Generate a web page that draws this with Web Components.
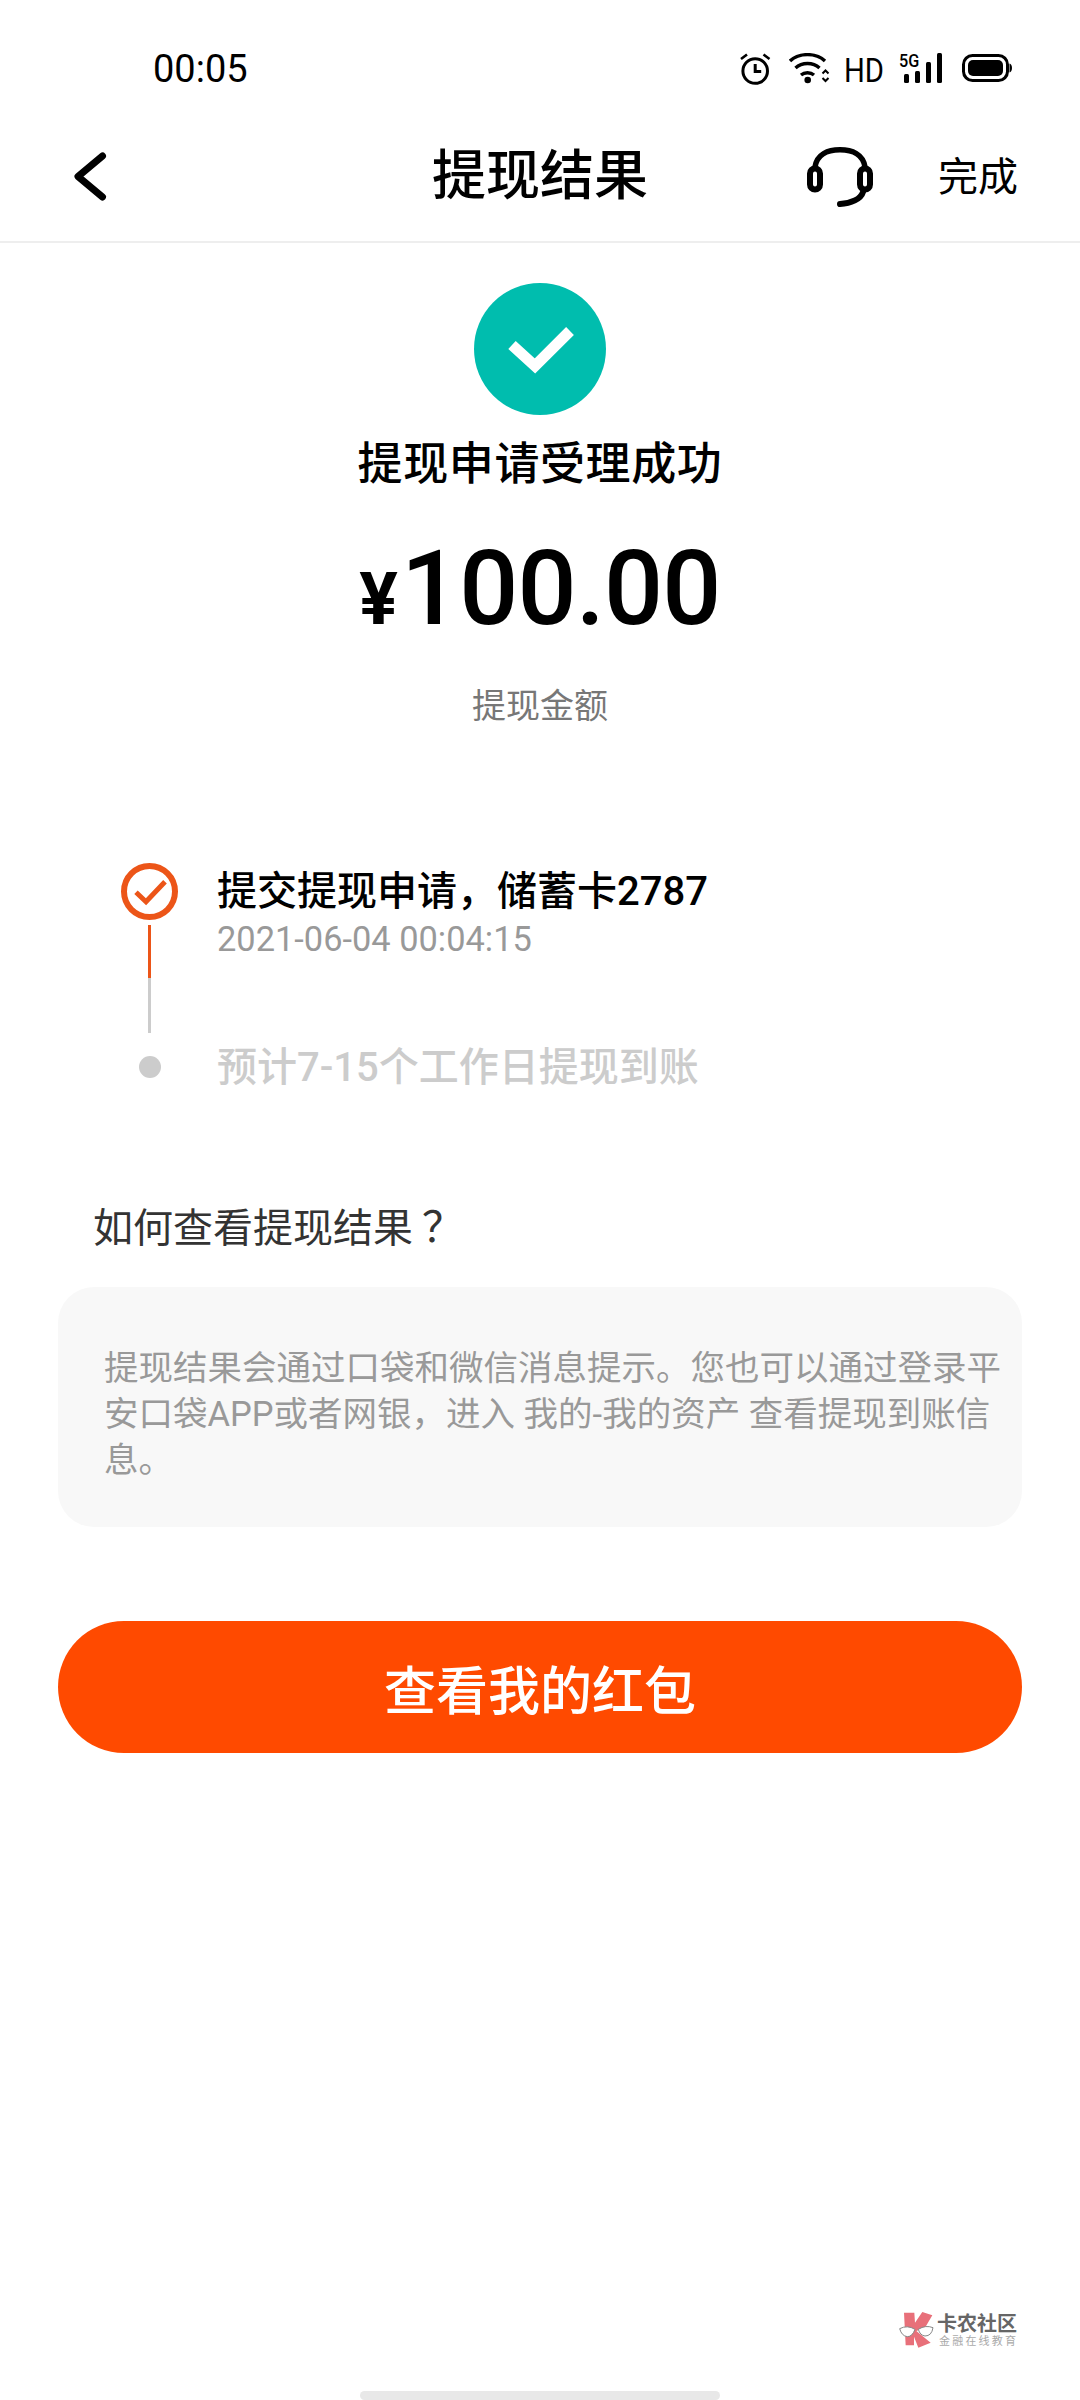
<!DOCTYPE html>
<html lang="zh-CN">
<head>
<meta charset="UTF-8">
<title>提现结果</title>
<style>
    html, body {
        margin: 0;
        background: #fff;
    }
    body {
        font-family: Roboto, "Noto Sans CJK SC", sans-serif;
        color: #000;
    }
    main {
        position: relative;
        display: block;
        width: 1080px;
        height: 2400px;
        overflow: hidden;
    }
</style>
</head>
<body>
<main>
    <status-bar time="00:05"></status-bar>
    <nav-bar title="提现结果" action="完成"></nav-bar>
    <result-hero amount="100.00" label="提现金额">提现申请受理成功</result-hero>
    <step-list>
        <step-item state="done" note="2021-06-04 00:04:15">提交提现申请，储蓄卡2787</step-item>
        <step-item state="todo">预计7-15个工作日提现到账</step-item>
    </step-list>
    <help-card question="如何查看提现结果">提现结果会通过口袋和微信消息提示。您也可以通过登录平安口袋APP或者网银，进入 我的-我的资产 查看提现到账信息。</help-card>
    <action-button>查看我的红包</action-button>
    <site-mark></site-mark>
    <home-bar></home-bar>
</main>

<script>
    class StatusBar extends HTMLElement {
        constructor() {
            super();
            this.attachShadow({ mode: 'open' });
            this.shadowRoot.innerHTML = `
                <style>
                    :host {
                        display: flex;
                        align-items: center;
                        justify-content: space-between;
                        height: 114px;
                        padding: 24px 68px 0 153px;
                        box-sizing: border-box;
                    }
                    .time {
                        font-size: 38px;
                        line-height: 40px;
                    }
                    .icons {
                        display: flex;
                        align-items: flex-start;
                        height: 32px;
                    }
                    svg { display: block; }
                    .hd {
                        font-size: 34px;
                        line-height: 32px;
                        margin: 1px 19px 0 14px;
                        transform: scaleX(.86);
                        transform-origin: left;
                        width: 36px;
                    }
                    .signal {
                        display: grid;
                        width: 43px;
                        margin-right: 20px;
                    }
                    .signal > * { grid-area: 1 / 1; }
                    .five {
                        font-size: 18px;
                        line-height: 15px;
                        font-weight: 500;
                        transform: scaleX(.9);
                        transform-origin: left;
                    }
                </style>
                <span class="time">${this.getAttribute('time')}</span>
                <div class="icons">
                    <svg width="31" height="32" viewBox="0 0 31 32" fill="none" stroke="#000" style="margin-right:18px">
                        <circle cx="15.2" cy="18" r="12.3" stroke-width="3"/>
                        <path d="M15.2 11v7.5h6" stroke-width="3"/>
                        <path d="M1 6L7 1.5M23.5 1.5L29.5 6" stroke-width="2.6"/>
                    </svg>
                    <svg width="41" height="31" viewBox="0 0 41 31" fill="none" stroke="#000" stroke-width="3.4">
                        <path d="M1 8C10 -0.5 27 -0.5 36 8"/>
                        <path d="M6.5 15C13 9 24 9 30.5 15"/>
                        <path d="M12 22C15.5 19 21.5 19 25 22"/>
                        <circle cx="18.7" cy="27" r="3.3" fill="#000" stroke="none"/>
                        <path d="M33.5 20.5L36.5 17.5L39.5 20.5M33.5 25L36.5 28L39.5 25" stroke-width="2"/>
                    </svg>
                    <span class="hd">HD</span>
                    <div class="signal">
                        <span class="five">5G</span>
                        <svg width="43" height="30" viewBox="0 0 43 30" fill="#000">
                            <rect x="5" y="21" width="5" height="9" rx="1.5"/>
                            <rect x="16" y="18" width="5" height="12" rx="1.5"/>
                            <rect x="27" y="9" width="5" height="21" rx="1.5"/>
                            <rect x="38" y="0" width="5" height="30" rx="1.5"/>
                        </svg>
                    </div>
                    <svg width="50" height="28" viewBox="0 0 50 28" style="margin-top:1px">
                        <rect x="1.5" y="1.5" width="44" height="25" rx="9" fill="none" stroke="#000" stroke-width="3"/>
                        <rect x="6" y="6" width="35" height="16" rx="5"/>
                        <path d="M47.5 9.5C49 10 50 11.5 50 14S49 18 47.5 18.5Z"/>
                    </svg>
                </div>
            `;
        }
    }

    class NavBar extends HTMLElement {
        constructor() {
            super();
            this.attachShadow({ mode: 'open' });
            this.shadowRoot.innerHTML = `
                <style>
                    :host {
                        display: grid;
                        grid-template-columns: 1fr auto 1fr;
                        align-items: center;
                        height: 129px;
                        padding: 0 62px 2px;
                        box-sizing: border-box;
                        border-bottom: 2px solid #eee;
                    }
                    h1 {
                        margin: 0;
                        font-size: 54px;
                        line-height: 60px;
                        font-weight: 500;
                    }
                    .back { margin-left: 10px; }
                    .right {
                        display: flex;
                        justify-content: flex-end;
                        align-items: center;
                        gap: 65px;
                    }
                    .done {
                        font-size: 40px;
                        line-height: 48px;
                        margin-top: 2px;
                    }
                    svg { display: block; }
                </style>
                <svg class="back" width="36" height="54" viewBox="0 0 36 54" fill="none" stroke="#000" stroke-width="7" stroke-linecap="round" stroke-linejoin="round">
                    <path d="M30.500 6L6 26.500L30.500 47"/>
                </svg>
                <h1>${this.getAttribute('title')}</h1>
                <div class="right">
                    <svg width="66" height="60" viewBox="0 0 66 60" fill="none" stroke="#000" stroke-width="5.500" stroke-linecap="round">
                        <path d="M8 20C10 7 21 2.800 33 2.800S56 7 58 20"/>
                        <rect x="3" y="21.500" width="10" height="21" rx="5" stroke-width="6"/>
                        <rect x="53" y="21.500" width="10" height="21" rx="5" stroke-width="6"/>
                        <path d="M56 45C54 52 44 56.500 33 57" stroke-width="6"/>
                    </svg>
                    <span class="done">${this.getAttribute('action')}</span>
                </div>
            `;
        }
    }

    class ResultHero extends HTMLElement {
        constructor() {
            super();
            this.attachShadow({ mode: 'open' });
            this.shadowRoot.innerHTML = `
                <style>
                    :host {
                        display: flex;
                        flex-direction: column;
                        align-items: center;
                        padding-top: 40px;
                    }
                    svg { display: block; }
                    .heading {
                        margin-top: 20px;
                        font-size: 45px;
                        line-height: 60px;
                        font-weight: 500;
                        letter-spacing: .6px;
                    }
                    .amount {
                        display: flex;
                        align-items: baseline;
                        margin-top: 34px;
                        font-weight: 500;
                        line-height: 120px;
                    }
                    .cur { font-size: 72px; margin-right: 3px; font-weight: 700; }
                    .num { font-size: 104px; letter-spacing: -.800px; }
                    .label {
                        margin-top: 24px;
                        font-size: 34px;
                        line-height: 44px;
                        color: #777;
                    }
                </style>
                <svg width="132" height="132" viewBox="0 0 132 132">
                    <circle cx="66" cy="66" r="66" fill="#00bdae"/>
                    <path d="M38 62L61 83L96 48" fill="none" stroke="#fff" stroke-width="11"/>
                </svg>
                <div class="heading"><slot></slot></div>
                <div class="amount"><span class="cur">¥</span><span class="num">${this.getAttribute('amount')}</span></div>
                <div class="label">${this.getAttribute('label')}</div>
            `;
        }
    }

    class StepList extends HTMLElement {
        constructor() {
            super();
            this.attachShadow({ mode: 'open' });
            this.shadowRoot.innerHTML = `
                <style>
                    :host {
                        display: flex;
                        flex-direction: column;
                        gap: 23px;
                        padding: 135px 0 0 121px;
                    }
                </style>
                <slot></slot>
            `;
        }
    }

    class StepItem extends HTMLElement {
        constructor() {
            super();
            this.attachShadow({ mode: 'open' });
            const done = this.getAttribute('state') === 'done';
            const note = this.getAttribute('note');
            this.shadowRoot.innerHTML = `
                <style>
                    :host {
                        display: grid;
                        grid-template-columns: 57px 1fr;
                        column-gap: 39px;
                    }
                    .marker {
                        display: flex;
                        flex-direction: column;
                        align-items: center;
                    }
                    svg { display: block; }
                    .line { width: 3px; }
                    .line.on { height: 53px; margin-top: 5px; background: #ec5518; }
                    .line.off { height: 55px; background: #ccc; }
                    .dot { width: 22px; height: 22px; border-radius: 50%; background: #ccc; }
                    .title {
                        padding-top: 1px;
                        font-size: 40px;
                        line-height: 56px;
                        font-weight: 500;
                    }
                    .title.muted { color: #ccc; padding-top: 0; line-height: 24px; }
                    .note {
                        margin-top: -3px;
                        font-size: 34.400px;
                        line-height: 44px;
                        color: #999;
                    }
                </style>
                <div class="marker">
                    ${done ? `
                    <svg width="57" height="57" viewBox="0 0 57 57" fill="none" stroke="#ec5518">
                        <circle cx="28.500" cy="28.500" r="25.500" stroke-width="6"/>
                        <path d="M15 29.300L25 38.700L44 18.700" stroke-width="5"/>
                    </svg>
                    <div class="line on"></div>
                    <div class="line off"></div>` : `<div class="dot"></div>`}
                </div>
                <div>
                    <div class="title ${done ? '' : 'muted'}"><slot></slot></div>
                    ${note ? `<div class="note">${note}</div>` : ''}
                </div>
            `;
        }
    }

    class HelpCard extends HTMLElement {
        constructor() {
            super();
            this.attachShadow({ mode: 'open' });
            this.shadowRoot.innerHTML = `
                <style>
                    :host {
                        display: block;
                        padding: 120px 58px 0;
                    }
                    .question {
                        font-size: 40px;
                        line-height: 56px;
                        color: #333;
                        padding-left: 35px;
                    }
                    /* 全角问号字形靠左，这里往右推 */
                    .mark { padding-left: 9px; font-size: 42px; }
                    .box {
                        margin-top: 30px;
                        height: 240px;
                        box-sizing: border-box;
                        padding: 58px 18px 0 46px;
                        border-radius: 36px;
                        background: #f8f8f8;
                        font-size: 34.500px;
                        line-height: 46px;
                        color: #999;
                    }
                </style>
                <div class="question">${this.getAttribute('question')}<span class="mark">？</span></div>
                <div class="box"><slot></slot></div>
            `;
        }
    }

    class ActionButton extends HTMLElement {
        constructor() {
            super();
            this.attachShadow({ mode: 'open' });
            this.shadowRoot.innerHTML = `
                <style>
                    :host {
                        display: flex;
                        align-items: center;
                        justify-content: center;
                        height: 132px;
                        margin: 94px 58px 0;
                        border-radius: 66px;
                        background: #ff4a00;
                        color: #fff;
                        font-size: 52px;
                        font-weight: 500;
                    }
                </style>
                <slot></slot>
            `;
        }
    }

    class SiteMark extends HTMLElement {
        constructor() {
            super();
            this.attachShadow({ mode: 'open' });
            this.shadowRoot.innerHTML = `
                <style>
                    :host {
                        position: absolute;
                        left: 899px;
                        top: 2312px;
                        display: flex;
                        align-items: center;
                        gap: 2px;
                    }
                    svg { display: block; }
                    .name {
                        font-size: 20px;
                        line-height: 22px;
                        font-weight: 700;
                        color: #666;
                    }
                    .sub {
                        font-size: 11px;
                        line-height: 13px;
                        letter-spacing: 2.200px;
                        color: #aaa;
                        padding-left: 2px;
                    }
                </style>
                <svg width="36" height="37" viewBox="120 98 108 111">
                    <path fill="#e8707a" d="M135 100H166L168 130L190 98L220 108L198 145L172 155L215 190L178 205L165 172V198H140Z"/>
                    <g fill="#fff" stroke="#888" stroke-width="3">
                        <path d="M122 148Q145 136 168 150Q160 172 145 172Q128 170 122 148Z"/>
                        <path d="M178 150Q200 136 222 145Q218 170 198 170Q183 168 178 150Z"/>
                    </g>
                </svg>
                <div>
                    <div class="name">卡农社区</div>
                    <div class="sub">金融在线教育</div>
                </div>
            `;
        }
    }

    class HomeBar extends HTMLElement {
        constructor() {
            super();
            this.attachShadow({ mode: 'open' });
            this.shadowRoot.innerHTML = `
                <style>
                    :host {
                        position: absolute;
                        left: 360px;
                        bottom: 0;
                        width: 360px;
                        height: 9px;
                        border-radius: 5px;
                        background: #e8e8e8;
                    }
                </style>
            `;
        }
    }

    customElements.define('status-bar', StatusBar);
    customElements.define('nav-bar', NavBar);
    customElements.define('result-hero', ResultHero);
    customElements.define('step-list', StepList);
    customElements.define('step-item', StepItem);
    customElements.define('help-card', HelpCard);
    customElements.define('action-button', ActionButton);
    customElements.define('site-mark', SiteMark);
    customElements.define('home-bar', HomeBar);
</script>
</body>
</html>
